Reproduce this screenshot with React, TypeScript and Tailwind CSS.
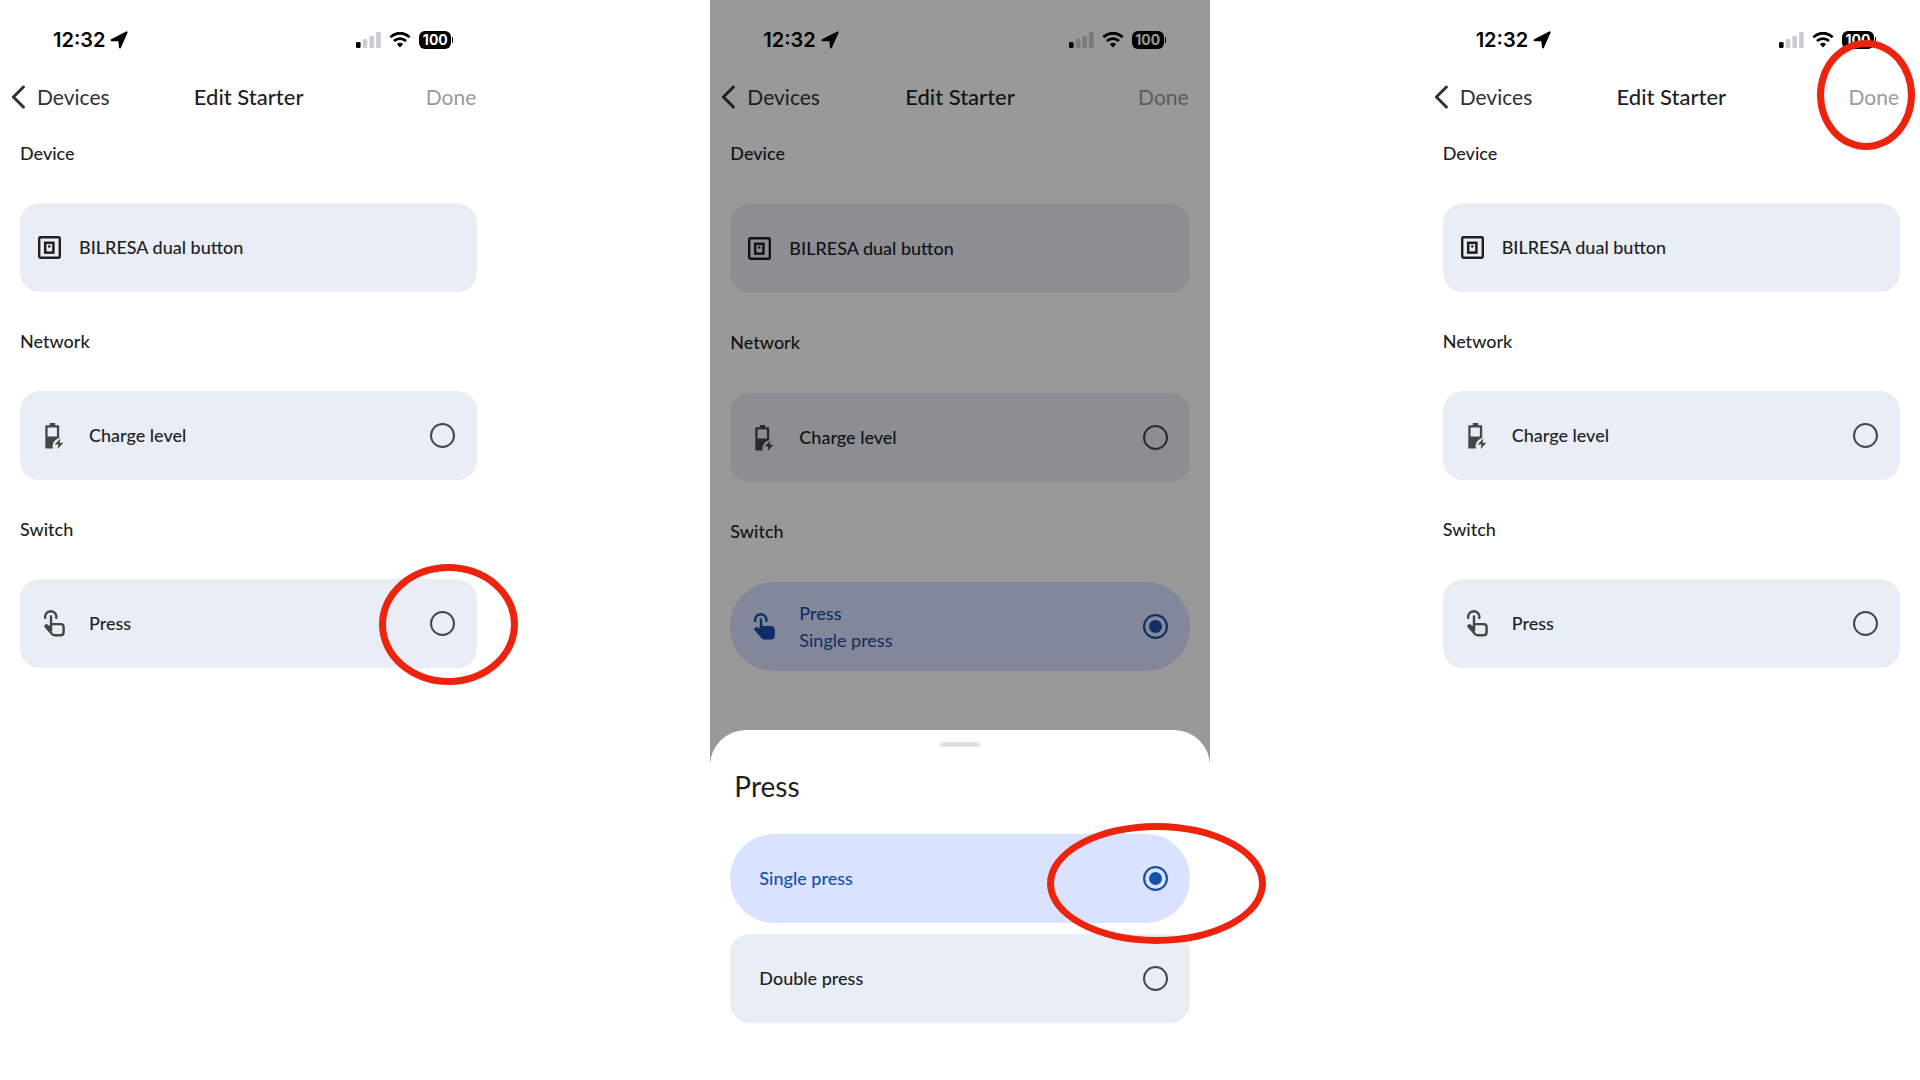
import { ReactNode } from "react";
import { clsx } from "clsx";

const LocationIcon = () => (
  <svg width="18" height="18" viewBox="0 0 18 18" aria-hidden="true">
    <path
      d="M16.6 1.4 10 16.4 9.2 9.2 1.6 9.2Z"
      fill="currentColor"
      stroke="currentColor"
      strokeWidth="2"
      strokeLinejoin="round"
    />
  </svg>
);

const SignalIcon = () => (
  <svg width="25" height="16" viewBox="0 0 25 16" aria-hidden="true">
    <rect x="0" y="10" width="4.6" height="6" rx="1.3" fill="#000" />
    <rect x="6.7" y="7" width="4.6" height="9" rx="1.3" fill="#c9cbd3" />
    <rect x="13.4" y="4" width="4.6" height="12" rx="1.3" fill="#c9cbd3" />
    <rect x="20.1" y="0" width="4.6" height="16" rx="1.3" fill="#c9cbd3" />
  </svg>
);

const WifiIcon = () => (
  <svg width="22" height="16" viewBox="0 0 22 16" fill="none" aria-hidden="true">
    <path d="M1.4 5.2a13.6 13.6 0 0 1 19.2 0" stroke="#000" strokeWidth="2.9" />
    <path d="M5 9.1a8.6 8.6 0 0 1 12 0" stroke="#000" strokeWidth="2.8" />
    <path d="M7.9 12.2a4.5 4.5 0 0 1 6.2 0L11 15.4Z" fill="#000" />
  </svg>
);

const ChevronIcon = () => (
  <svg width="14" height="24" viewBox="0 0 14 24" fill="none" aria-hidden="true">
    <path
      d="M12.4 2 2.4 12l10 10"
      stroke="currentColor"
      strokeWidth="3"
      strokeLinecap="round"
      strokeLinejoin="round"
    />
  </svg>
);

const SwitchIcon = () => (
  <svg width="23" height="23" viewBox="0 0 23 23" fill="none" stroke="#1f1f1f" aria-hidden="true">
    <rect x="1.2" y="1.2" width="20.6" height="20.6" rx="1.2" strokeWidth="2.4" />
    <rect x="7.2" y="6.8" width="8.2" height="9.8" strokeWidth="2.5" />
    <rect x="10.2" y="9.2" width="2.2" height="2.4" fill="#1f1f1f" stroke="none" />
  </svg>
);

const ChargeIcon = () => (
  <svg width="24" height="28" viewBox="0 0 24 28" fill="currentColor" aria-hidden="true">
    <path
      fillRule="evenodd"
      d="M7.8 1h5.4v2.2h3.2q.8 0 .8.8V16a8.6 8.6 0 0 0-6.4 10.6H4.1q-.8 0-.8-.8V4q0-.8.8-.8h3.7ZM5.6 5.6v8.8h9.3V5.6Z"
    />
    <path d="M18.4 16.6 12.6 22.6h3.8l-.8 4.4 5.8-6.2h-3.8Z" />
  </svg>
);

const TouchIcon = ({ filled }: { filled: boolean }) => (
  <svg
    width="24"
    height="28"
    viewBox="0 0 24 28"
    fill="none"
    stroke="currentColor"
    strokeWidth="2.4"
    aria-hidden="true"
  >
    <path d="M3.4 8.9a5.7 5.7 0 1 1 10.7 0" />
    <path d="M9 5.4v14.2" />
    <path
      d="M9 14.1h9.6q3 0 3 3v5.2q0 3-3 3h-5.8q-1.6 0-2.6-1.1L3.6 16.4"
      fill={filled ? "currentColor" : "none"}
    />
    <path d="M1.7 16 4.3 13.8 10.2 17.4v4.2L7 21.4Z" fill="currentColor" stroke="none" />
  </svg>
);

const StatusBar = () => (
  <div className="flex h-20 items-center justify-between pr-11 pl-[53px] text-black">
    <div className="flex items-center gap-[5px] font-['Inter',sans-serif] text-xl font-semibold">
      12:32
      <LocationIcon />
    </div>
    <div className="flex items-center gap-2">
      <SignalIcon />
      <WifiIcon />
      <div className="flex items-center gap-px">
        <span className="flex h-[18px] w-8 items-center justify-center rounded-md bg-black font-['Inter',sans-serif] text-[14px] font-bold text-white">
          100
        </span>
        <span className="h-1.5 w-px rounded-r bg-black" />
      </div>
    </div>
  </div>
);

// Hand-drawn style highlight, placed over the control it points at
const Highlight = ({ className }: { className: string }) => (
  <span
    className={clsx(
      "pointer-events-none absolute z-10 rounded-[50%] border-[7px] border-[#ee230d]",
      className
    )}
  />
);

interface OptionProps {
  group: string;
  label: string;
  detail?: string;
  icon?: ReactNode;
  selected?: boolean;
  children?: ReactNode;
}

const Option = ({ group, label, detail, icon, selected = false, children }: OptionProps) => (
  <label
    className={clsx(
      "relative flex h-[89px] items-center gap-[23px] pr-[22px]",
      icon ? "pl-[22px]" : "pl-[29px]",
      selected
        ? "rounded-[44px] bg-[#d9e2ff] text-[#174fab]"
        : "rounded-[20px] bg-[#e8edf6] text-[#444746]"
    )}
  >
    {icon}
    <span className="flex-1 leading-[27px]">
      <span className={clsx("block font-medium", !selected && "text-[#1f1f1f]")}>{label}</span>
      {detail && <span className="block">{detail}</span>}
    </span>
    <input
      type="radio"
      name={group}
      defaultChecked={selected}
      className="size-[25px] appearance-none rounded-full border-2 border-current checked:bg-current checked:shadow-[inset_0_0_0_4px_#d9e2ff]"
    />
    {children}
  </label>
);

interface SectionProps {
  title: string;
  dimmed: boolean;
  children: ReactNode;
}

const Section = ({ title, dimmed, children }: SectionProps) => (
  <section>
    <h2
      className={clsx(
        "leading-6 font-medium text-[#1f1f1f]",
        dimmed ? "mb-[39px]" : "mb-[38px]"
      )}
    >
      {title}
    </h2>
    {children}
  </section>
);

interface ScreenProps {
  id: string;
  sheetOpen?: boolean;
  highlight?: "press" | "done";
}

const Screen = ({ id, sheetOpen = false, highlight }: ScreenProps) => (
  <article className="min-w-0">
    <div className={clsx("relative", sheetOpen && "pb-[97px]")}>
      <StatusBar />
      <header className="relative grid h-[30px] grid-cols-[1fr_auto_1fr] items-center px-[11px] text-[21px] text-[#1f1f1f]">
        <button type="button" className="flex items-center gap-3 justify-self-start text-[#303134]">
          <ChevronIcon />
          Devices
        </button>
        <h1 className="text-[22px] font-medium">Edit Starter</h1>
        <button type="button" className="justify-self-end pr-2.5 text-[#9a9a9f]">
          Done
        </button>
        {highlight === "done" && (
          <Highlight className="-top-10 right-[5px] h-[110px] w-[98px]" />
        )}
      </header>
      <main className="flex flex-col gap-[37px] px-5 pt-[31px]">
        <Section title="Device" dimmed={sheetOpen}>
          <div className="flex h-[89px] items-center gap-[18px] rounded-[20px] bg-[#e8edf6] px-[18px] leading-[27px] font-medium text-[#1f1f1f]">
            <SwitchIcon />
            BILRESA dual button
          </div>
        </Section>
        <Section title="Network" dimmed={sheetOpen}>
          <Option group={`${id}-starter`} label="Charge level" icon={<ChargeIcon />} />
        </Section>
        <Section title="Switch" dimmed={sheetOpen}>
          <Option
            group={`${id}-starter`}
            label="Press"
            detail={sheetOpen ? "Single press" : undefined}
            icon={<TouchIcon filled={sheetOpen} />}
            selected={sheetOpen}
          >
            {highlight === "press" && (
              <Highlight className="-top-[15px] -right-[41px] h-[121px] w-[139px]" />
            )}
          </Option>
        </Section>
      </main>
      {sheetOpen && <div className="absolute inset-0 bg-black/40" />}
    </div>
    {sheetOpen && (
      <div
        role="dialog"
        aria-label="Press"
        className="relative -mt-[38px] rounded-t-[36px] bg-white px-5 pt-3"
      >
        <div className="mx-auto h-[5px] w-10 rounded-sm bg-[#dfe1e7]" />
        <h2 className="mt-[23px] mb-8 pl-1 text-[28px] leading-8 text-[#1f1f1f]">Press</h2>
        <div className="flex flex-col gap-[11px]">
          <Option group={`${id}-press`} label="Single press" selected>
            <Highlight className="-top-[11px] -right-[76px] h-[121px] w-[219px]" />
          </Option>
          <Option group={`${id}-press`} label="Double press" />
        </div>
      </div>
    )}
  </article>
);

export default function App() {
  return (
    <div className="grid min-h-screen grid-cols-[497fr_499fr_497fr] items-start gap-x-[213px] overflow-hidden bg-white font-['Lato',sans-serif] text-lg">
      <Screen id="choose" highlight="press" />
      <Screen id="sheet" sheetOpen />
      <Screen id="confirm" highlight="done" />
    </div>
  );
}
